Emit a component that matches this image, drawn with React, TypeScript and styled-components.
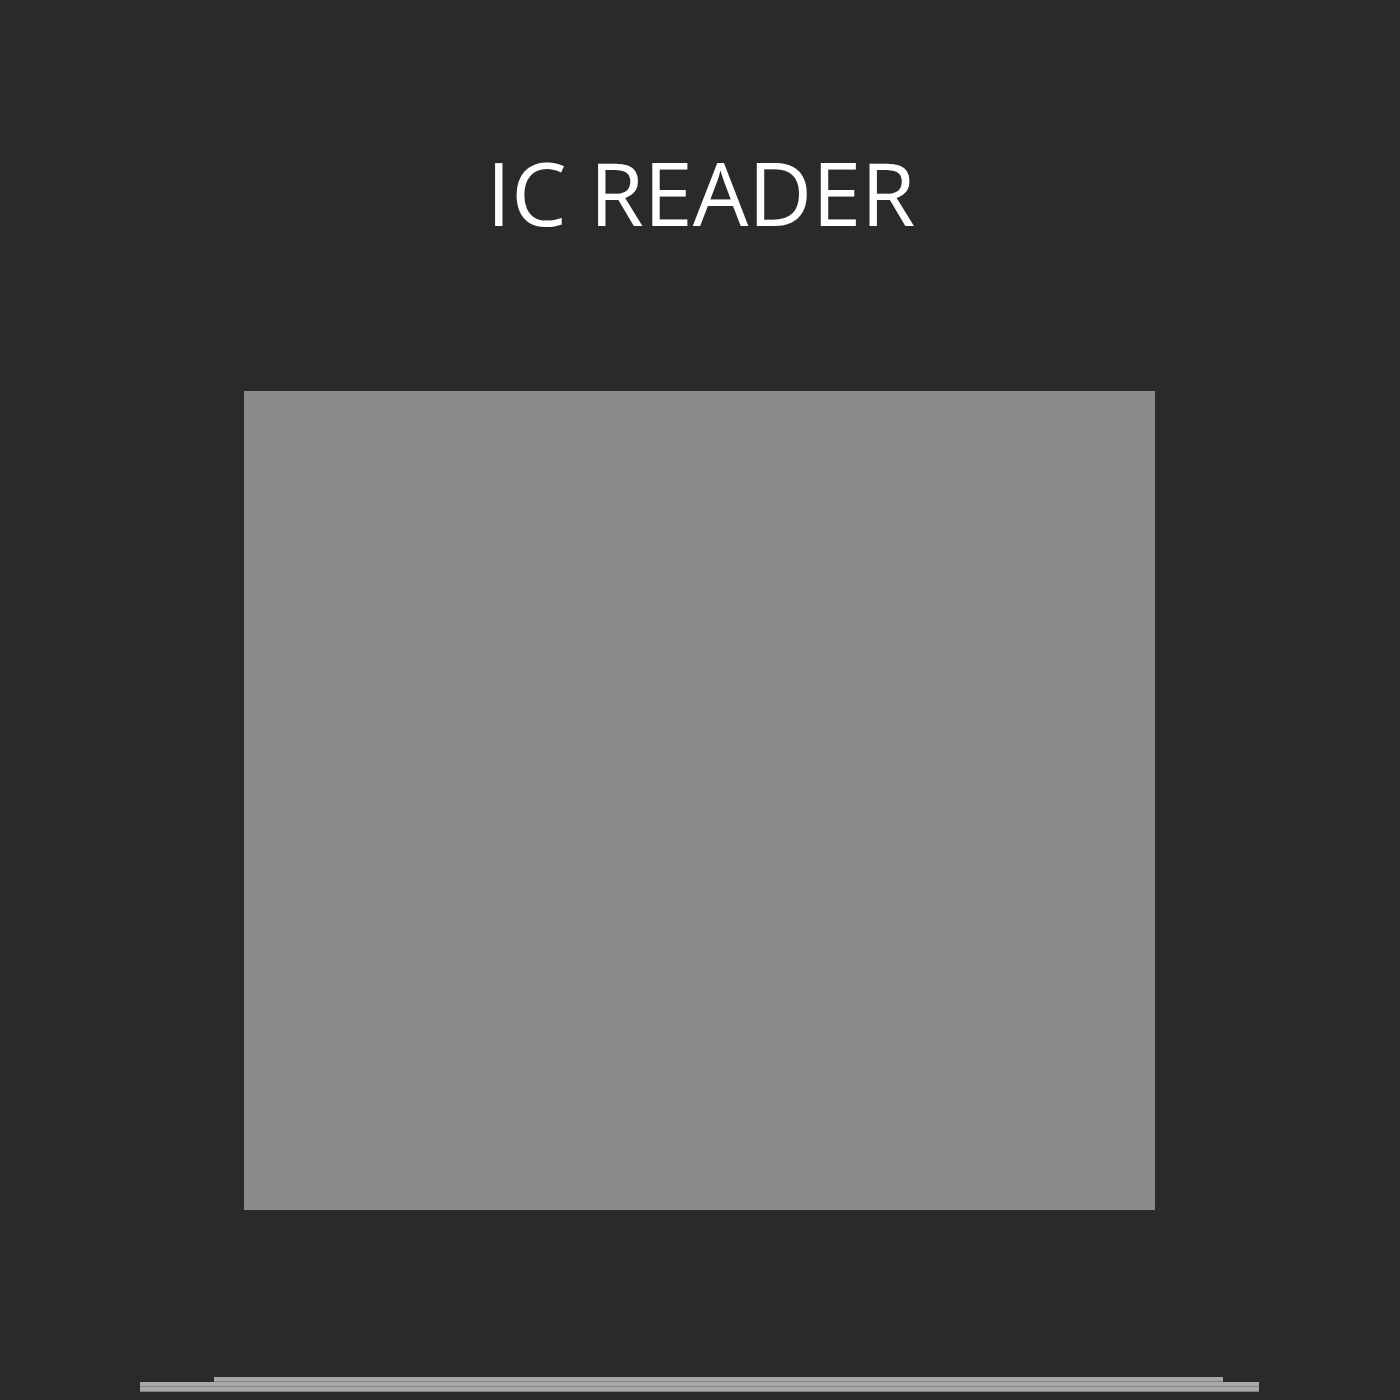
import React from "react";
import styled, { createGlobalStyle } from "styled-components";

const Global = createGlobalStyle`
  html, body {
    margin: 0;
    padding: 0;
    background: #2a2a2a;
  }
  body {
    font-family: "Open Sans", "Noto Sans", sans-serif;
  }
`;

const Page = styled.div`
  width: 1400px;
  height: 1400px;
  background: #2a2a2a;
  display: flex;
  flex-direction: column;
  align-items: center;
  padding-top: 132px;
  box-sizing: border-box;
`;

const Title = styled.h1`
  margin: 0;
  font-family: "Open Sans", sans-serif;
  font-weight: 400;
  font-size: 88px;
  line-height: 120px;
  color: #ffffff;
  letter-spacing: 0;
  transform: translateX(1px);
`;

const Viewer = styled.div`
  margin-top: 139px;
  width: 911px;
  height: 819px;
  background: #8a8a8a;
  transform: translateX(-1px);
`;

const Tray = styled.div`
  margin-top: 167px;
  width: 1119px;
  display: flex;
  flex-direction: column;
  transform: translateX(-1px);
`;

const Bar = styled.div<{ $inset?: number; $width: number }>`
  height: 4px;
  width: ${(p) => p.$width}px;
  margin-left: ${(p) => p.$inset ?? 0}px;
  background: #a8a8a8;
  border-bottom: 1px solid #858585;
`;

export default function App() {
  return (
    <>
      <Global />
      <Page>
        <Title>IC READER</Title>
        <Viewer />
        <Tray>
          <Bar $inset={74} $width={1009} />
          <Bar $width={1119} />
          <Bar $width={1119} />
        </Tray>
      </Page>
    </>
  );
}
